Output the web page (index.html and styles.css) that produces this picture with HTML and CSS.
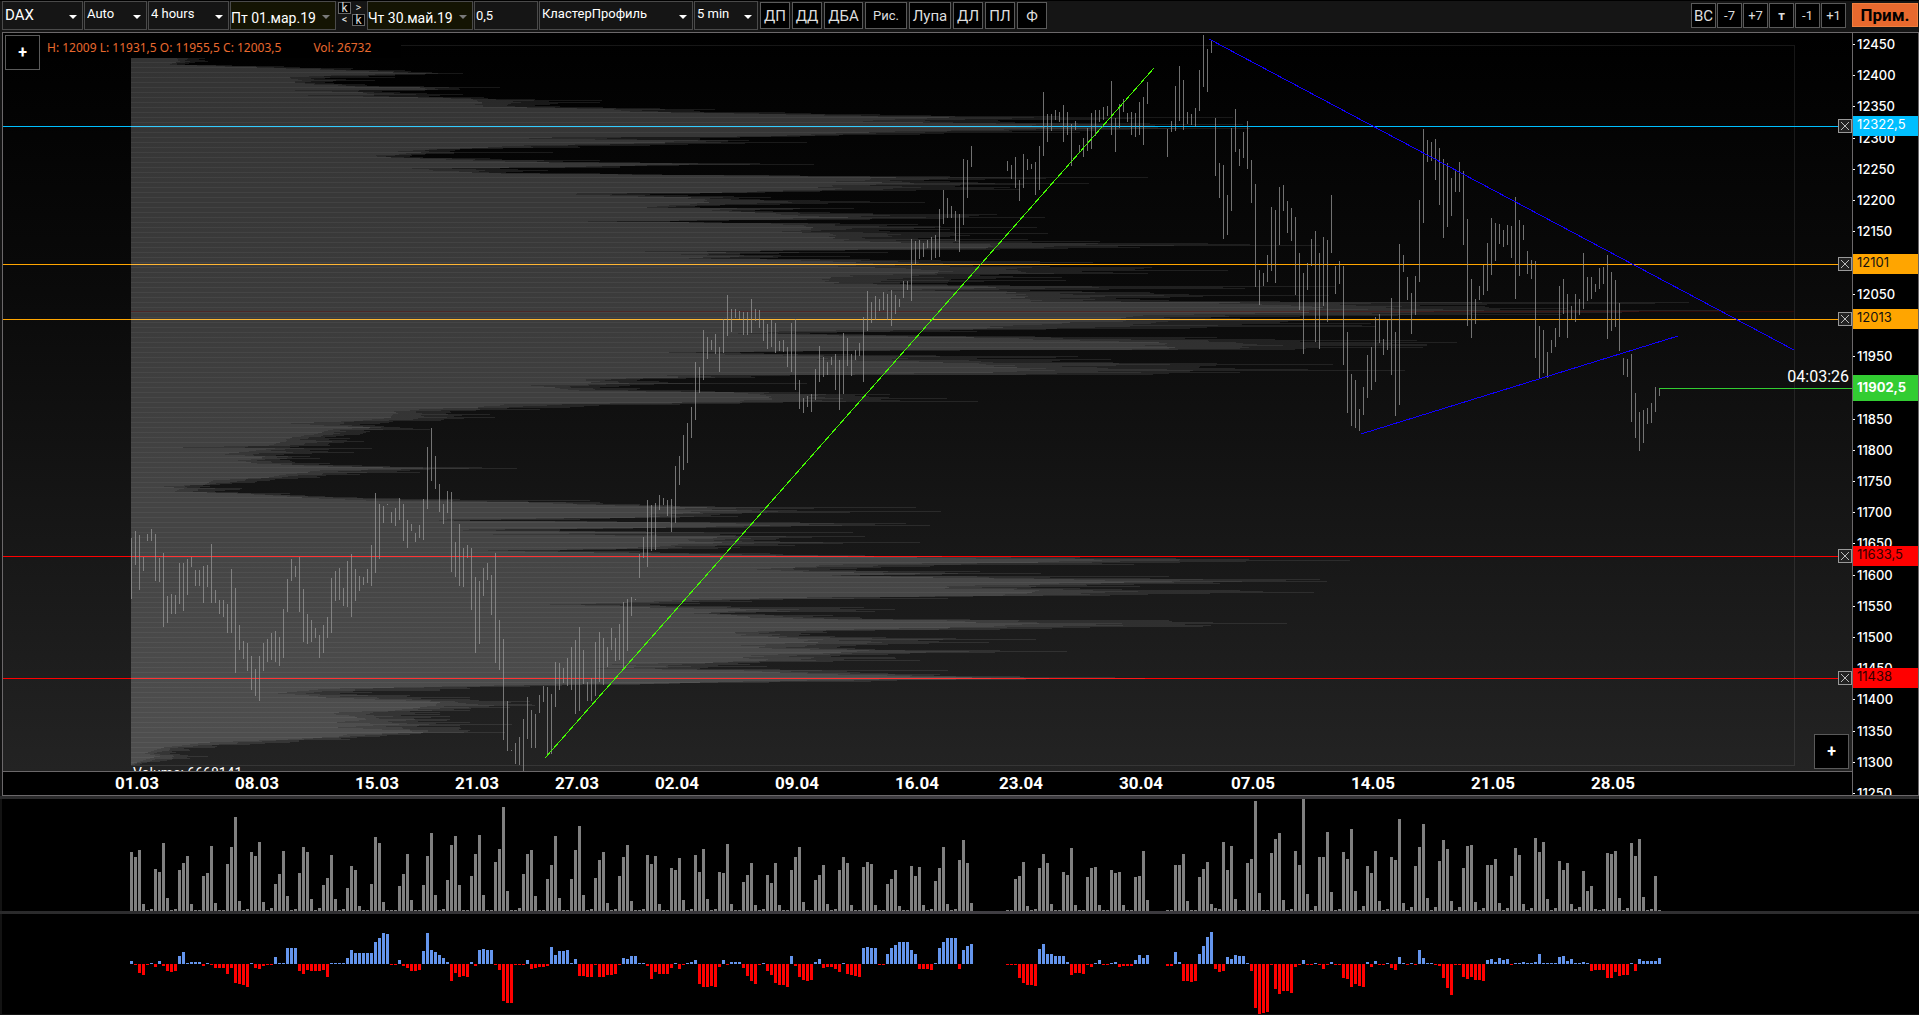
FILE: index.html
```html
<!DOCTYPE html>
<html lang="ru">
<head>
<meta charset="utf-8">
<title>DAX</title>
<link rel="stylesheet" href="styles.css">
</head>
<body>
<div class="app">
  <header class="toolbar">
    <div class="group">
      <label class="field w-symbol large"><select aria-label="Инструмент"><option>DAX</option></select></label>
      <label class="field w-auto"><select aria-label="Масштаб"><option>Auto</option></select></label>
      <label class="field w-period"><select aria-label="Период"><option>4 hours</option></select></label>
      <label class="field w-date date"><select aria-label="Начало"><option>Пт 01.мар.19</option></select></label>
      <div class="steps">
        <button class="boxed">k</button><button>&gt;</button>
        <button>&lt;</button><button class="boxed">k</button>
      </div>
      <label class="field w-date date"><select aria-label="Конец"><option>Чт 30.май.19</option></select></label>
      <input class="step-input" type="text" value="0,5" aria-label="Шаг">
      <label class="field w-type"><select aria-label="Тип графика"><option>КластерПрофиль</option></select></label>
      <label class="field w-minutes"><select aria-label="Интервал"><option>5 min</option></select></label>
    </div>
    <div class="group tools">
      <button>ДП</button><button>ДД</button><button class="wide">ДБА</button><button class="wider small">Рис.</button><button class="wider">Лупа</button><button>ДЛ</button><button>ПЛ</button><button>Ф</button>
    </div>
    <div class="group shifts">
      <button class="big">ВС</button><button>-7</button><button>+7</button><button class="bold">т</button><button>-1</button><button>+1</button>
    </div>
    <button class="apply">Прим.</button>
  </header>

  <main class="chart">
    <div class="plot" id="plot">
      <svg class="canvas" id="price" viewBox="3 33 1849 738" preserveAspectRatio="none" aria-hidden="true"></svg>
      <p class="legend"><span>H: 12009 L: 11931,5 O: 11955,5 C: 12003,5</span><span>Vol: 26732</span></p>
      <button class="plus top" aria-label="Добавить сверху">+</button>
      <button class="plus bottom" aria-label="Добавить снизу">+</button>
      <p class="total">Volume: 6668141</p>
    </div>
    <div class="dates" id="dates"></div>
    <div class="prices" id="prices"></div>
  </main>
  <div class="splitter"></div>
  <section class="panel"><svg class="canvas" id="volume" viewBox="2 799 1917 112" preserveAspectRatio="none" aria-hidden="true"></svg></section>
  <div class="splitter"></div>
  <section class="panel"><svg class="canvas" id="delta" viewBox="2 914 1917 100" preserveAspectRatio="none" aria-hidden="true"></svg></section>
</div>
<script src="chart.js"></script>
</body>
</html>
```
FILE: styles.css
```css
* { box-sizing: border-box; }

body {
  margin: 0;
  background: #131313;
  color: #fff;
  font-family: Roboto, "Liberation Sans", sans-serif;
  font-size: 13px;
}

button, select, input { font: inherit; color: inherit; }
p { margin: 0; }

.app {
  display: grid;
  grid-template-rows: 32px minmax(0, 764fr) 3px minmax(0, 112fr) 3px minmax(0, 100fr);
  height: 100vh;
  min-height: 600px;
  padding-bottom: 1px;
}

/* toolbar */
.toolbar {
  display: flex;
  align-items: flex-start;
  padding: 0 1px 0 2px;
  border-top: 1px solid #000;
  background: #151515;
}

.group { display: flex; gap: 1px; }

.field {
  position: relative;
  display: flex;
  height: 29px;
  border: 1px solid #4a4a4a;
  background: #151515;
}

.field select {
  appearance: none;
  width: 100%;
  padding: 0 14px 4px 2px;
  border: 0;
  background: none;
  outline: 0;
}

.field::after {
  content: "";
  position: absolute;
  right: 5px;
  top: 13px;
  border: 4px solid transparent;
  border-top-color: #fff;
  border-bottom: 0;
  pointer-events: none;
}

.field.large select { font-size: 15px; padding-bottom: 2px; }
.field.date { background: #141403; }
.field.date select { padding: 5px 14px 0 0; font-size: 14px; }
.field.date::after { border-top-color: #7a7a7a; }

.w-symbol { width: 81px; }
.w-auto { width: 63px; }
.w-period { width: 81px; }
.w-date { width: 106px; }
.w-type { width: 154px; }
.w-minutes { width: 64px; }

.steps {
  display: grid;
  grid-template-columns: 13px 13px;
  grid-auto-rows: 12px;
  gap: 0 1px;
  margin: 1px;
}

.steps button {
  padding: 0;
  border: 0;
  background: none;
  color: #ddd;
  font-size: 11px;
  line-height: 8px;
}

.steps .boxed { border: 1px solid #666; background: #000; font-size: 12px; }

.step-input {
  width: 64px;
  height: 29px;
  padding: 0 1px;
  border: 1px solid #4a4a4a;
  background: #151515;
}

.tools { gap: 2px; margin: 1px auto 0 2px; }

.tools button, .shifts button {
  padding: 0;
  border: 1px solid #5a5a5a;
  background: #000;
  color: #ddd;
}

.tools button { width: 30px; height: 27px; font-size: 15px; }
.tools .wide { width: 39px; }
.tools .wider { width: 42px; }
.tools .small { font-size: 13px; }

.shifts { margin: 2px 6px 0 0; }
.shifts button { width: 25px; height: 25px; font-size: 13px; }
.shifts .big { font-size: 15px; }
.shifts .bold { font-weight: 700; }

.apply {
  width: 66px;
  height: 24px;
  margin-top: 2px;
  padding: 0;
  border: 1px solid #f08040;
  background: #e8692e;
  color: #000;
  font-size: 17px;
  font-weight: 700;
}

/* price chart */
.chart {
  display: grid;
  grid-template: minmax(0, 1fr) 23px / minmax(0, 1fr) 65px;
  margin-left: 2px;
  border: 1px solid #6b686a;
  background: #000;
}

.plot {
  position: relative;
  overflow: hidden;
  border-right: 1px solid #6b686a;
  border-bottom: 1px solid #6b686a;
  background: linear-gradient(#000, #0a0a0a 35%, #232323);
}

.canvas {
  display: block;
  width: 100%;
  height: 100%;
  shape-rendering: crispEdges;
}

.dates { position: relative; border-right: 1px solid #6b686a; }

.dates span {
  position: absolute;
  top: 1px;
  transform: translateX(-50%);
  font-size: 17px;
  font-weight: 700;
  line-height: 20px;
}

.prices {
  position: relative;
  grid-area: 1 / 2 / 3 / 3;
  overflow: hidden;
  font-family: Inter, "Liberation Sans", sans-serif;
  font-size: 13px;
}

.prices .tick, .prices .tag {
  position: absolute;
  left: 0;
  right: 0;
  transform: translateY(-50%);
  line-height: 16px;
}

.tick { padding-left: 4px; font-weight: 500; }

.tick::before {
  content: "";
  position: absolute;
  left: 0;
  top: 8px;
  width: 2px;
  height: 1px;
  background: #fff;
}

.tag { height: 20px; padding-left: 4px; }
.tag.blue { background: #00bfff; }
.tag.orange { background: #ffa500; color: #111; }
.tag.red { background: #f00; color: #300; }
.tag.green { height: 26px; padding-top: 4px; background: #32cd32; font-weight: 700; }

.legend {
  position: absolute;
  left: 38px;
  top: 4px;
  display: flex;
  gap: 32px;
  padding: 0 30px 0 6px;
  background: #000;
  color: #e8692e;
  font-family: "Noto Sans", "Open Sans", sans-serif;
  font-size: 12px;
  line-height: 21px;
}

.plus {
  position: absolute;
  width: 35px;
  height: 35px;
  padding: 0;
  border: 1px solid #5a5a5a;
  background: #000;
  font-size: 16px;
  font-weight: 700;
}

.plus.top { left: 2px; top: 2px; }
.plus.bottom { right: 3px; bottom: 2px; }

.total {
  position: absolute;
  left: 130px;
  bottom: -11px;
  font-size: 14px;
  line-height: 18px;
}

.remove {
  position: absolute;
  right: 0;
  width: 14px;
  height: 14px;
  padding: 0;
  border: 1px solid #999;
  background: #222;
  transform: translateY(-50%);
}

.remove svg { display: block; width: 12px; height: 12px; stroke: #bbb; }

.timer {
  position: absolute;
  right: 3px;
  transform: translateY(-100%);
  font-size: 16px;
  line-height: 22px;
}

/* lower panels */
.splitter { background: linear-gradient(90deg, #2a2a2b, #403e43 50%, #2a2a2b); }

.panel {
  margin-left: 2px;
  background: #000;
}
```
FILE: chart.js
```js
const FIRST_X = 131;
const STEP = 4;
const PLOT = { x: 3, y: 33, w: 1849, h: 738, axisH: 762 };
const PRICE_TOP = 12450;
const PRICE_TOP_Y = 46;
const PX_PER_POINT = 0.6242;

/* high and low of every bar, as canvas rows; 0 marks a missing bar */
const bars = `538,599 531,565 535,590 557,571 534,541 529,541 534,581 558,582 553,627 596,623
594,614 595,614 563,604 563,611 559,595 557,567 570,586 570,586 566,603 565,587
544,603 590,603 600,614 600,617 604,633 569,633 588,673 625,650 641,659 643,671
656,690 669,696 656,701 643,671 639,662 633,660 631,662 637,666 609,658 579,612
559,581 566,577 557,612 589,642 614,644 620,642 628,638 635,658 625,653 617,638
578,633 571,601 568,600 588,606 561,607 554,617 569,601 576,591 577,585 569,583
545,586 493,573 504,559 506,523 504,505 512,523 508,526 498,520 504,541 520,548
524,531 533,542 525,538 499,540 447,509 428,481 456,489 484,512 504,524 491,513
492,572 542,577 524,586 548,587 545,558 548,610 577,653 581,644 568,596 563,580
575,615 553,663 620,670 639,740 701,751 750,751 743,764 737,765 719,771 697,739
710,748 714,748 695,713 686,702 687,756 694,754 662,707 663,690 668,683 658,686
647,690 640,714 627,711 650,684 682,701 678,701 642,696 632,682 638,685 647,667
628,650 638,661 624,660 602,668 599,651 597,616 599,600 554,578 537,558 500,567
505,551 503,550 495,510 498,505 500,516 499,532 466,523 456,485 435,470 423,463
407,438 362,420 367,393 330,380 337,359 340,350 334,354 347,372 319,353 295,336
309,332 309,318 311,319 312,335 312,335 299,333 309,321 310,328 320,341 324,349
320,347 323,353 341,351 340,352 347,367 323,372 319,390 380,409 398,413 396,407
394,412 369,400 346,382 357,377 362,375 357,365 354,390 360,410 333,394 338,366
354,376 350,360 343,356 317,382 291,331 302,323 296,320 299,311 292,310 294,320
290,326 295,314 299,307 281,298 281,290 239,301 241,264 240,259 243,257 240,248
237,260 235,258 209,257 190,224 198,218 206,218 211,241 214,252 159,225 160,198
146,167 0 0 0 0 0 0 0 0 161,171
165,179 157,188 180,201 154,188 159,170 164,169 162,195 146,190 92,156 114,142
114,131 110,120 112,122 105,142 112,135 124,166 121,130 145,153 138,157 128,151
113,149 110,136 110,122 107,120 106,116 81,135 118,152 104,128 99,112 113,122
112,135 113,137 102,135 97,145 82,104 0 0 0 0 129,157
121,132 86,131 66,121 80,130 112,124 114,125 108,127 70,111 35,87 49,92
41,53 118,176 163,198 165,239 195,235 128,211 109,152 149,166 132,158 121,169
160,203 184,287 270,305 273,286 255,282 207,271 210,283 187,245 185,211 201,233
208,241 217,295 253,310 273,354 263,290 239,266 231,342 253,349 237,306 240,322
195,253 266,294 261,284 266,365 332,413 374,426 380,428 409,431 387,415 355,398
347,390 317,382 314,343 339,355 320,350 298,375 332,416 244,405 255,272 277,300
293,334 276,315 200,282 129,223 140,162 142,161 139,180 148,205 159,238 163,227
178,216 169,192 162,192 171,245 219,326 279,338 299,324 286,300 265,295 243,291
218,275 223,261 224,244 230,247 225,245 226,258 197,299 220,276 225,240 251,274
260,279 261,358 326,378 330,373 352,378 340,353 328,347 286,337 279,314 294,338
306,319 294,322 299,315 253,309 277,301 277,299 284,292 268,289 267,284 255,339
272,331 280,327 303,351 358,375 359,377 354,422 393,438 412,451 410,443 408,424
403,423 387,412 388,396`.split(/\s+/);

const volumes = `59 54 61 7 1 2 42 39 68 13 1 2 41 48 55 7 1 1 35 38 65 8 1 1 47 64 94 10 1 2
59 55 69 9 1 3 27 37 60 15 1 2 38 64 59 12 1 3 26 33 56 12 1 2 23 45 41 5 1 1 27 74 68 9 1 1 1
25 37 57 11 1 1 26 55 78 16 1 2 31 66 75 26 1 1 35 57 76 16 1 1 49 62 104 20 1 1 3 37 57 61 15 1 1
32 46 75 13 1 1 32 61 85 16 1 2 33 51 59 8 1 2 35 54 66 10 1 1 2 56 47 55 7 1 1 43 41 53 11 1 2
56 39 62 12 1 2 39 38 67 7 1 1 29 36 48 6 1 2 36 28 48 6 1 1 41 54 64 9 1 1 31 36 46 7 1 2
41 54 48 6 1 1 44 49 47 6 1 1 27 32 41 5 1 1 45 35 44 6 1 2 30 43 64 7 1 2 51 71 48 8
0 0 0 0 0 0 0 0 1 1 32 35 49 5 1 2 43 57 48 7 1 1 39 36 63 6 1 1 34 43 44 6 1 1 41 38 39 6 1 1
34 35 60 11 0 0 0 0 1 1 46 46 57 10 1 1 34 42 49 7 3 2 69 41 65 12 1 1 48 52 110 18 1 1
58 72 78 11 1 2 60 46 112 17 1 5 54 54 79 19 1 2 59 52 82 20 1 5 45 38 60 10 1 2 54 51 92 8 1 4
45 64 87 13 1 4 50 71 62 10 1 4 43 65 66 9 1 3 46 46 52 8 1 3 35 63 56 7 1 3 73 59 69 12 1 3
50 41 48 7 2 4 40 20 25 2 1 2 58 57 60 13 1 3 68 55 72 14 1 2 35 1`.split(/\s+/).map(Number);

const deltas = `3 -1 -9 -11 -1 1 -3 3 -2 -7 -8 -7 8 12 1 2 2 2 -2 1 -1 -4 -4 -4 -10 -4 -19 -20 -21 -23
1 -4 -5 -2 -1 -1 7 1 1 16 16 16 -7 -10 -6 -7 -7 -7 -6 -13 1 1 1 1 6 14 11 11 11 11
11 22 26 31 30 -1 -1 4 -2 -4 -7 -7 -6 13 31 14 12 9 6 2 -17 -9 -13 -12 -13 2 -2 14 15 14
14 -1 -6 -37 -39 -39 -1 -1 -1 4 -5 -4 -3 -3 -2 17 9 13 13 14 1 5 -12 -12 -13 -13 -1 -13 -13 -11
-11 -10 -1 6 5 8 8 1 1 -2 -15 -8 -10 -10 -10 -4 1 -5 -1 1 2 4 -20 -23 -23 -22 -23 -3 4 -1
2 2 2 -4 -12 -17 -20 -1 1 -7 -11 -19 -21 -21 -23 8 -2 -13 -16 -17 -16 2 5 -4 -3 -3 -5 -8 1 -10
-11 -12 -13 16 17 16 16 -1 -1 10 16 19 22 22 22 14 10 -5 -5 -5 -6 1 16 22 26 26 26 -5 14 18
20 0 0 0 0 0 0 0 0 -1 -1 -1 -14 -19 -21 -21 -22 15 20 10 10 8 8 8 2 -11 -9 -9 -10 -1
-3 1 4 -1 -1 1 2 -3 -2 -2 -2 4 9 6 9 0 0 0 0 -2 -2 12 2 -17 -17 -18 -17 10 18 27
32 -5 -8 -7 7 5 9 8 8 1 -7 -44 -50 -49 -48 -1 -25 -30 -27 -27 -29 -3 -1 4 -1 -1 1 -1 -5 -1
2 -1 -1 -14 -15 -23 -20 -22 -23 2 -3 3 -1 -1 1 -4 -6 7 1 -1 1 -1 14 6 1 1 -1 -2 -14 -24
-31 -1 -1 -13 -15 -13 -16 -16 -17 4 5 2 6 4 5 -1 1 1 2 1 1 2 10 1 1 1 1 7 8 3
5 1 1 2 1 -7 -6 -6 -6 -14 -14 -8 -12 -11 -11 1 -7 5 3 3 3 3 6`.split(/\s+/).map(Number);

/* volume profile: row, end of the dense part, end of the thin tail */
const profile = `58,178,205 61,180,208 64,171,185 66,225,284 68,290,353 70,350,405 72,400,432 73,430,463 75,335,395 77,295,395
78,293,325 80,305,375 82,295,325 84,320,365 86,360,424 87,425,500 89,430,460 90,300,425 92,365,400 94,375,463
95,310,440 97,425,484 99,480,535 100,485,602 102,487,600 104,485,550 106,490,560 108,580,660 109,620,715 111,640,700
112,680,785 114,800,880 116,880,1060 117,960,1233 119,900,1100 121,870,1000 123,1000,1150 124,1050,1243 126,1030,1150
128,1100,1250 130,960,1100 132,880,1080 134,830,920 136,745,800 137,560,740 138,530,700 139,600,700 140,700,749 142,680,807
143,640,745 145,530,650 147,500,580 149,430,460 151,400,450 152,425,553 154,400,425 155,376,412 156,378,410 158,420,490
160,480,600 162,550,640 163,680,760 164,700,814 166,600,620 167,520,620 168,420,500 170,440,548 172,480,506 173,510,600
175,740,800 177,900,1148 179,880,985 181,860,950 183,930,1089 185,850,960 187,840,1010 189,850,1020 191,760,820 192,740,765
193,590,700 194,580,650 196,640,734 197,700,771 200,720,820 202,710,925 204,700,780 205,680,720 207,660,700 208,745,854
210,720,755 212,770,830 214,800,997 217,850,1045 219,780,870 221,600,670 223,780,840 224,800,918 227,820,1037 229,830,950
231,790,890 233,850,1048 236,830,950 239,850,1028 241,880,1100 243,960,1208 244,1000,1250 245,1020,1320 247,1000,1140
249,880,1000 251,660,760 252,740,888 254,690,740 256,740,850 258,700,760 259,780,870 261,850,1040 262,860,1093 264,900,1060
266,850,1050 267,880,1152 270,960,1228 273,960,1148 275,860,980 277,850,1062 280,840,1066 283,850,900 285,930,1010
286,1010,1335 288,1000,1245 290,900,1030 292,1020,1150 295,1030,1329 297,1040,1170 299,1040,1140 301,1050,1280
302,1260,1689 303,1240,1655 305,1330,1420 306,1320,1485 308,1350,1567 309,1380,1500 310,1320,1720 312,1340,1622
314,1200,1562 316,1150,1300 318,1130,1240 320,1160,1490 322,1100,1280 323,1080,1371 326,1010,1376 328,1000,1190
330,850,950 331,800,977 333,750,810 335,850,920 337,1000,1217 339,1060,1275 340,1100,1417 341,1150,1300 342,1180,1457
345,1160,1427 347,1200,1423 349,1140,1295 350,860,960 352,682,740 354,740,850 356,830,1078 359,840,1111 362,960,1113
364,1010,1333 366,1020,1200 368,1050,1235 369,1060,1308 370,1080,1405 372,1000,1240 374,860,1153 375,680,790 377,690,755
379,600,640 382,600,668 383,640,807 385,540,630 388,565,640 390,580,700 392,740,800 394,770,890 398,790,947 400,760,900
401,760,978 403,620,740 404,510,680 407,485,570 409,425,540 411,400,450 414,400,490 417,395,495 420,370,441 423,295,380
425,330,375 427,370,400 429,340,430 431,330,370 434,315,360 438,290,350 441,290,364 445,270,330 447,185,290 448,280,372
450,260,310 452,240,354 454,225,284 456,265,310 458,265,320 460,240,290 463,260,330 466,330,390 467,390,482 468,430,517
470,320,410 472,310,420 474,290,360 477,270,320 480,215,270 482,210,255 484,205,220 486,165,210 488,185,242 489,180,240
491,175,215 493,240,290 496,290,325 498,320,400 500,370,590 502,540,600 504,590,640 506,660,715 507,720,916 509,680,760
510,740,797 511,700,941 512,710,850 514,660,720 516,660,738 517,640,680 519,450,580 520,440,470 522,680,800 523,740,906
525,780,930 527,680,750 529,480,560 530,470,560 532,660,853 534,500,720 536,740,865 539,700,776 541,700,780 542,730,920
545,680,795 548,640,718 550,500,560 551,530,640 553,660,770 555,780,865 557,920,1080 558,1000,1176 559,1100,1249
560,1120,1350 562,1040,1180 564,860,1134 566,820,930 569,760,830 571,820,980 573,920,1041 575,850,860 576,900,1169
578,1000,1150 579,1080,1320 581,1180,1327 583,1080,1220 586,960,1140 588,970,1080 590,1060,1240 592,1050,1314 595,1020,1110
597,820,880 598,760,948 600,690,730 601,660,752 603,600,700 604,560,650 607,660,864 609,760,895 611,740,875 613,700,720
615,740,833 617,760,860 619,860,970 620,950,1169 622,1000,1213 623,1060,1287 626,1000,1203 628,900,1052 629,860,1000
632,740,827 634,750,810 637,780,886 639,830,1036 642,820,989 645,760,856 648,780,855 650,880,1000 651,880,1067 652,860,995
655,770,840 657,760,895 660,780,920 662,720,760 664,620,750 666,670,767 668,600,700 669,680,780 670,760,948 672,780,860
674,860,940 676,920,1020 677,980,1115 678,1000,1145 679,900,1026 681,760,871 683,660,680 684,560,640 686,450,530 688,340,470
690,310,440 693,280,340 695,310,410 697,330,470 699,380,470 701,440,530 705,440,535 707,420,510 710,400,470 712,340,440
714,340,440 716,360,450 719,370,450 722,340,470 724,400,512 727,345,460 730,410,470 732,430,505 734,350,410 736,340,380
739,290,350 742,210,290 744,190,250 747,165,215 750,155,190 753,145,170 756,160,208 758,150,190 761,140,160 764,132,140`
  .split(/\s+/).map(r => r.split(",").map(Number));

const levels = [
  { price: 12322.5, color: "#00bfff", tag: "blue" },
  { price: 12101, color: "#ffa500", tag: "orange" },
  { price: 12013, color: "#ffa500", tag: "orange" },
  { price: 11633.5, color: "#f00", tag: "red" },
  { price: 11438, color: "#f00", tag: "red" }
];
const lastPrice = 11902.5;

const dateMarks = [["01.03", 0], ["08.03", 30], ["15.03", 60], ["21.03", 85], ["27.03", 110], ["02.04", 135],
  ["09.04", 165], ["16.04", 195], ["23.04", 221], ["30.04", 251], ["07.05", 279], ["14.05", 309],
  ["21.05", 339], ["28.05", 369]];

const barX = i => FIRST_X + i * STEP;
const priceY = p => Math.round(PRICE_TOP_Y + (PRICE_TOP - p) * PX_PER_POINT);
const rect = (x, y, w, h) => `M${x} ${y}h${w}v${h}h${-w}z`;
const path = (d, fill) => `<path d="${d}" fill="${fill}"/>`;
const noise = n => { const s = Math.sin(n * 127.1) * 43758.5453; return s - Math.floor(s); };
const format = p => String(p).replace(".", ",");

function drawProfile() {
  const layers = ["", "", "", ""];
  let k = 0;
  for (let y = 58; y <= 764; y++) {
    while (k < profile.length - 2 && profile[k + 1][0] <= y) k++;
    const [y0, a0, b0] = profile[k];
    const [y1, a1, b1] = profile[k + 1];
    const t = (y - y0) / (y1 - y0);
    const exact = t === 0 || t === 1;
    const dense = Math.round(a0 + (a1 - a0) * t - (noise(y + 3) * (a0 - FIRST_X)) / 30);
    const reach = b0 + (b1 - b0) * t;
    const tail = Math.round(dense + (reach - dense) * (exact ? 1 : 0.5 + noise(y) * 0.5));
    const middle = Math.round(dense + (tail - dense) * (0.25 + noise(y + 9) * 0.35));
    layers[0] += rect(FIRST_X, y, tail - FIRST_X, 1);
    layers[1] += rect(FIRST_X, y, middle - FIRST_X, 1);
    layers[2] += rect(FIRST_X, y, dense - FIRST_X, 1);
    if (y % 5 === 2) layers[3] += rect(FIRST_X, y, dense - FIRST_X, 1);
  }
  return path(layers[0], "rgba(255,255,255,.09)") + path(layers[1], "rgba(255,255,255,.07)") +
    path(layers[2], "rgba(255,255,255,.06)") + path(layers[3], "rgba(255,255,255,.05)");
}

function drawPrice() {
  let svg = path(rect(FIRST_X, 45, 1664, 1) + rect(1794, 45, 1, 721) + rect(FIRST_X, 765, 1664, 1), "rgba(255,255,255,.09)");
  for (const l of levels) svg += path(rect(3, priceY(l.price), 1849, 1), l.color);
  svg += drawProfile();
  svg += path(rect(FIRST_X, 311, 1663, 1), "rgba(110,0,0,.35)");
  let d = "";
  bars.forEach((b, i) => {
    if (b === "0") return;
    const [top, bottom] = b.split(",").map(Number);
    d += rect(barX(i), top, 1, bottom - top);
  });
  svg += path(d, "rgba(150,150,150,.75)");
  svg += path(rect(1659, priceY(lastPrice), 193, 1), "#32cd32");
  svg += '<path d="M545 758L1154 68" stroke="#4f0"/><path d="M1209 39L1794 350M1361 434L1678 336" stroke="#10f"/>';
  document.getElementById("price").innerHTML = svg;
}

function drawPanels() {
  document.getElementById("volume").innerHTML =
    path(volumes.map((v, i) => rect(barX(i) - 1, 911 - v, 3, v)).join(""), "#808080");
  const up = deltas.map((v, i) => (v > 0 ? rect(barX(i) - 1, 964 - v, 3, v) : "")).join("");
  const down = deltas.map((v, i) => (v < 0 ? rect(barX(i) - 1, 964, 3, -v) : "")).join("");
  document.getElementById("delta").innerHTML = path(up, "#6495ed") + path(down, "#f00");
}

function drawLabels() {
  const axisTop = y => ((y - PLOT.y) / PLOT.axisH) * 100 + "%";
  const plotTop = y => ((y - PLOT.y) / PLOT.h) * 100 + "%";
  const tagged = [...levels.map(l => l.price), lastPrice];
  let prices = "";
  for (let p = 12450; p >= 11250; p -= 50) {
    /* a tag fully covers the tick of nearly the same price */
    if (tagged.some(q => q >= p && q - p < 14)) continue;
    prices += `<span class="tick" style="top:${axisTop(priceY(p) - 2)}">${p}</span>`;
  }
  for (const l of levels) {
    prices += `<span class="tag ${l.tag}" style="top:${axisTop(priceY(l.price))}">${format(l.price)}</span>`;
  }
  prices += `<span class="tag green" style="top:${axisTop(priceY(lastPrice))}">${format(lastPrice)}</span>`;
  document.getElementById("prices").innerHTML = prices;

  document.getElementById("dates").innerHTML = dateMarks.map(([text, i]) =>
    `<span style="left:${((barX(i) + 6 - PLOT.x) / PLOT.w) * 100}%">${text}</span>`).join("");

  const plot = document.getElementById("plot");
  for (const l of levels) {
    plot.insertAdjacentHTML("beforeend",
      `<button class="remove" aria-label="Удалить ${format(l.price)}" style="top:${plotTop(priceY(l.price))}"><svg viewBox="0 0 12 12"><path d="M2 2L10 10M10 2L2 10"/></svg></button>`);
  }
  plot.insertAdjacentHTML("beforeend", `<span class="timer" style="top:${plotTop(priceY(lastPrice))}">04:03:26</span>`);
}

drawPrice();
drawPanels();
drawLabels();
```
